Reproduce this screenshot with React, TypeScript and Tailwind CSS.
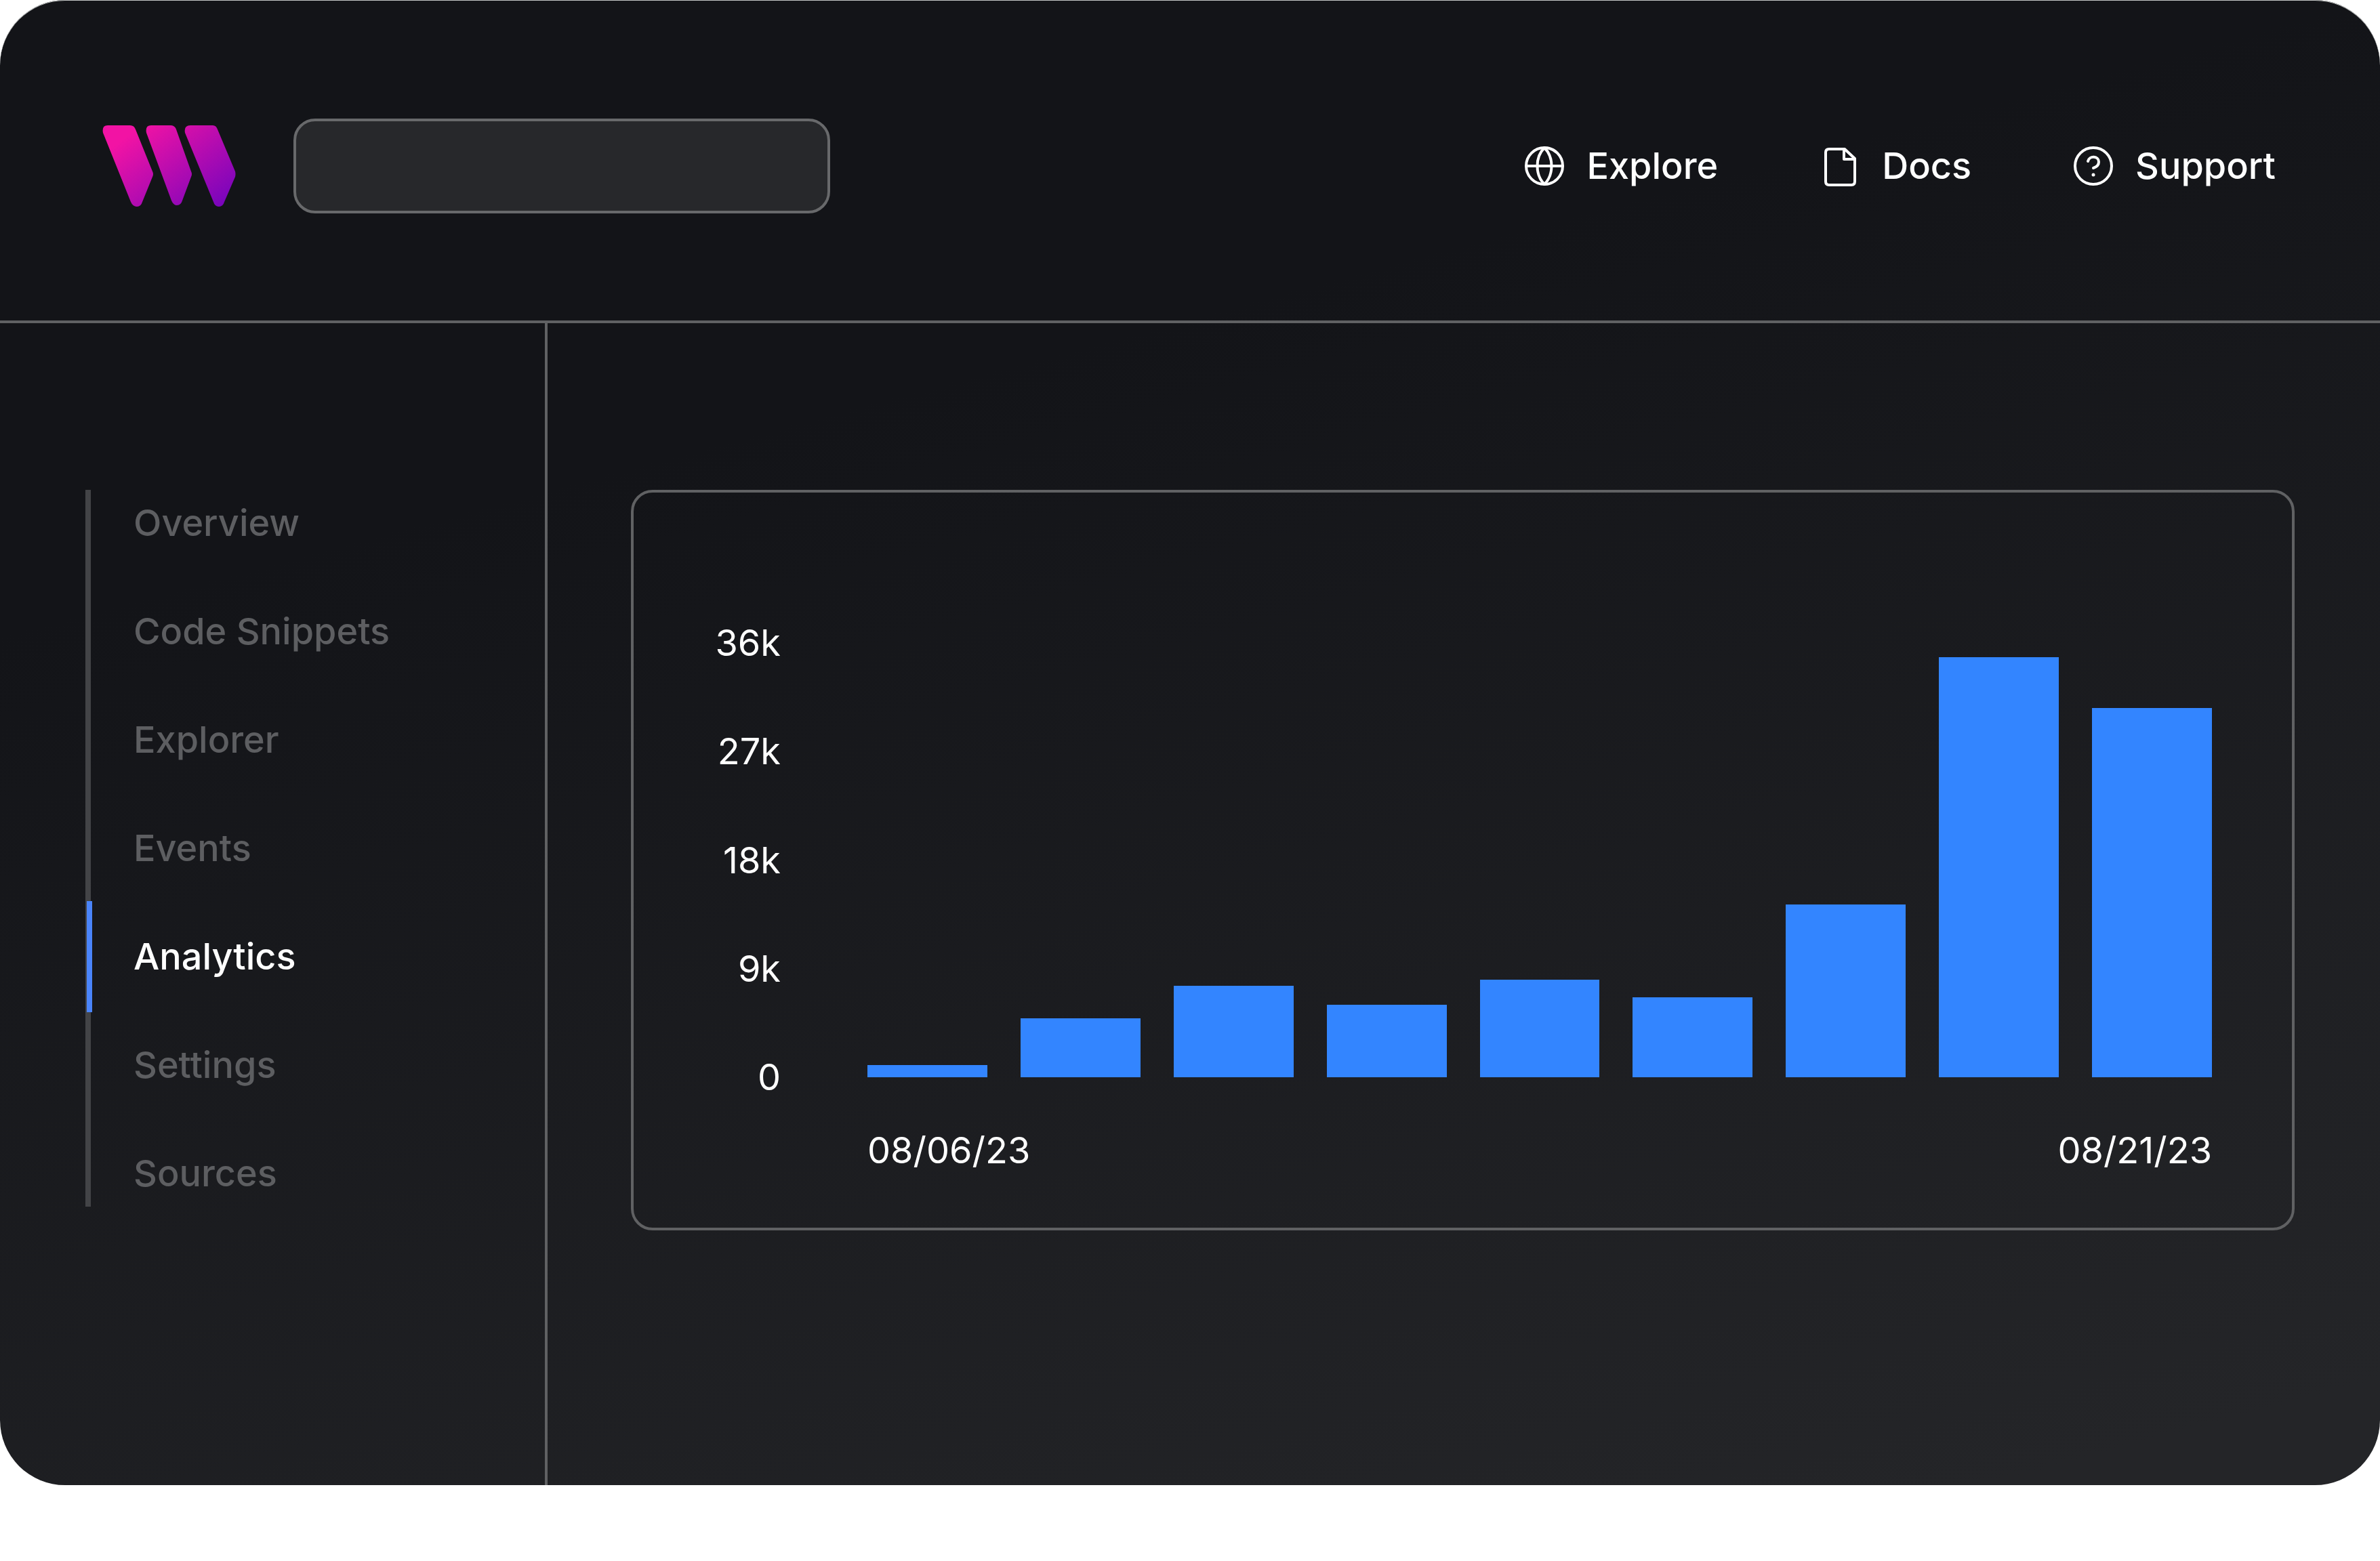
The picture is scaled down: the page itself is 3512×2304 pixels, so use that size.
const links = ["Explore", "Docs", "Support"] as const;

const sections = ["Overview", "Code Snippets", "Explorer", "Events", "Analytics", "Settings", "Sources"];

const ticks = ["36k", "27k", "18k", "9k", "0"];

// Bar heights as a share of the tallest bar.
const bars = [18, 87, 135, 107, 144, 118, 255, 620, 545];

function Logo() {
  return (
    <svg className="h-[122px] w-[198px]" viewBox="0 0 198 122" fill="none" aria-hidden="true">
      <defs>
        <linearGradient id="logo" x1="30" y1="22" x2="134" y2="162" gradientUnits="userSpaceOnUse">
          <stop stopColor="#f213a4" />
          <stop offset="1" stopColor="#7204bd" />
        </linearGradient>
      </defs>
      <g fill="url(#logo)">
        <path d="M8 1H41Q47 1 49 7L74 69Q76 73 74 77L59 114Q57 121 51 121Q45 121 42 114L1 12Q-1 1 8 1Z" />
        <path d="M72 1H101Q107 1 109 7L131 69Q133 73 131 77L118 112Q116 119 110 119Q105 119 102 112L65 12Q63 1 72 1Z" />
        <path d="M130 1H163Q168 1 170 7L196 69Q197 73 196 77L180 114Q178 121 172 121Q166 121 164 114L122 12Q120 1 130 1Z" />
      </g>
    </svg>
  );
}

function LinkIcon({ name }: { name: (typeof links)[number] }) {
  return (
    <svg
      className="size-[60px]"
      viewBox="0 0 60 60"
      fill="none"
      stroke="currentColor"
      strokeWidth="4"
      strokeLinecap="round"
      strokeLinejoin="round"
      aria-hidden="true"
    >
      {name === "Explore" && (
        <>
          <circle cx="30" cy="30" r="27" />
          <path d="M3 30H57M30 3C16 17 16 43 30 57C44 43 44 17 30 3Z" />
        </>
      )}
      {name === "Docs" && (
        <>
          <path d="M37 5H14Q9 5 9 10V53Q9 58 14 58H47Q52 58 52 53V19Z" />
          <path d="M36 5V20H52" />
        </>
      )}
      {name === "Support" && (
        <>
          <circle cx="30" cy="30" r="27" />
          <path d="M22 23C24 14 38 15 38 24C38 30 33 32 30 33" />
          <circle cx="30" cy="43" r="2.5" fill="currentColor" stroke="none" />
        </>
      )}
    </svg>
  );
}

export default function App() {
  return (
    <div className="min-h-screen bg-white font-['Inter',sans-serif] text-[54px] leading-[68px] text-white">
      <div className="flex min-h-[2192px] flex-col overflow-hidden rounded-[96px] bg-linear-[165deg,#131418_30%,#242528_95%] shadow-[inset_0_1px_0_#c4c7c6]">
        <header className="flex h-[477px] shrink-0 items-start justify-between border-b-4 border-[#606163] pt-[175px] pr-[154px] pl-[151px]">
          <div className="flex items-center gap-[84px]">
            <a href="#" aria-label="Home">
              <Logo />
            </a>
            <input
              type="search"
              aria-label="Search"
              className="h-[140px] w-[792px] rounded-[32px] border-4 border-[#68696b] bg-[#27282b] px-10 outline-none"
            />
          </div>
          <nav className="flex h-[140px] items-center gap-[150px] font-medium">
            {links.map((name) => (
              <a key={name} href="#" className="flex items-center gap-8">
                <LinkIcon name={name} />
                {name}
              </a>
            ))}
          </nav>
        </header>

        <div className="flex grow">
          <aside className="w-[808px] shrink-0 border-r-4 border-[#606163] pt-[246px] pl-[126px]">
            <nav className="flex h-[1058px] flex-col justify-between border-l-8 border-[#434447] pt-[15px] pb-[15px] font-medium text-[#5d5e61]">
              {sections.map((name) =>
                name === "Analytics" ? (
                  <a key={name} href="#" aria-current="page" className="relative pl-[63px] text-white">
                    <span className="absolute top-1/2 -left-[6px] h-[164px] w-2 -translate-y-1/2 bg-[#4a84fb]" />
                    {name}
                  </a>
                ) : (
                  <a key={name} href="#" className="pl-[63px]">
                    {name}
                  </a>
                ),
              )}
            </nav>
          </aside>

          <main className="grow pt-[246px] pr-[126px] pl-[123px]">
            <figure className="flex h-[1093px] gap-[128px] rounded-[32px] border-4 border-[#606163] pt-[188px] pr-[118px] pl-[118px]">
              <div className="flex h-[709px] w-[99px] shrink-0 flex-col items-end justify-between">
                {ticks.map((tick) => (
                  <span key={tick}>{tick}</span>
                ))}
              </div>
              <div className="flex grow flex-col pt-[55px]">
                <div className="flex h-[620px] items-end gap-[49px]">
                  {bars.map((value, i) => (
                    <div key={i} className="flex-1 bg-[#3385ff]" style={{ height: `${(value / 620) * 100}%` }} />
                  ))}
                </div>
                <figcaption className="mt-[74px] flex justify-between">
                  <span>08/06/23</span>
                  <span>08/21/23</span>
                </figcaption>
              </div>
            </figure>
          </main>
        </div>
      </div>
    </div>
  );
}
